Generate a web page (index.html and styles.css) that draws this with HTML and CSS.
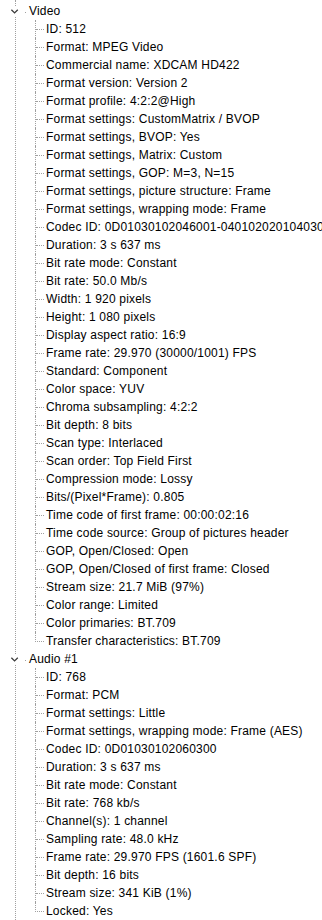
FILE: index.html
```html
<!DOCTYPE html>
<html>
  <head>
    <meta charset="UTF-8">
    <title>MediaInfo - Tree</title>
    <link rel="stylesheet" href="styles.css">
  </head>
  <body>
    <ul class="tree">
      <li class="node">
        <div class="node-head">
          <span class="toggle">
            <svg width="12" height="10" viewBox="0 0 12 10"><path d="M1.5 2.5 L5 6 L8.5 2.5" fill="none" stroke="#3c3c3c" stroke-width="1.4"/></svg>
          </span>
          <span class="dot"></span>
          <span class="label">Video</span>
        </div>
        <ul class="children">
          <li>ID: 512</li>
          <li>Format: MPEG Video</li>
          <li>Commercial name: XDCAM HD422</li>
          <li>Format version: Version 2</li>
          <li>Format profile: 4:2:2@High</li>
          <li>Format settings: CustomMatrix / BVOP</li>
          <li>Format settings, BVOP: Yes</li>
          <li>Format settings, Matrix: Custom</li>
          <li>Format settings, GOP: M=3, N=15</li>
          <li>Format settings, picture structure: Frame</li>
          <li>Format settings, wrapping mode: Frame</li>
          <li>Codec ID: 0D01030102046001-0401020201040300</li>
          <li>Duration: 3 s 637 ms</li>
          <li>Bit rate mode: Constant</li>
          <li>Bit rate: 50.0 Mb/s</li>
          <li>Width: 1 920 pixels</li>
          <li>Height: 1 080 pixels</li>
          <li>Display aspect ratio: 16:9</li>
          <li>Frame rate: 29.970 (30000/1001) FPS</li>
          <li>Standard: Component</li>
          <li>Color space: YUV</li>
          <li>Chroma subsampling: 4:2:2</li>
          <li>Bit depth: 8 bits</li>
          <li>Scan type: Interlaced</li>
          <li>Scan order: Top Field First</li>
          <li>Compression mode: Lossy</li>
          <li>Bits/(Pixel*Frame): 0.805</li>
          <li>Time code of first frame: 00:00:02:16</li>
          <li>Time code source: Group of pictures header</li>
          <li>GOP, Open/Closed: Open</li>
          <li>GOP, Open/Closed of first frame: Closed</li>
          <li>Stream size: 21.7 MiB (97%)</li>
          <li>Color range: Limited</li>
          <li>Color primaries: BT.709</li>
          <li>Transfer characteristics: BT.709</li>
        </ul>
      </li>
      <li class="node">
        <div class="node-head">
          <span class="toggle">
            <svg width="12" height="10" viewBox="0 0 12 10"><path d="M1.5 2.5 L5 6 L8.5 2.5" fill="none" stroke="#3c3c3c" stroke-width="1.4"/></svg>
          </span>
          <span class="dot"></span>
          <span class="label">Audio #1</span>
        </div>
        <ul class="children">
          <li>ID: 768</li>
          <li>Format: PCM</li>
          <li>Format settings: Little</li>
          <li>Format settings, wrapping mode: Frame (AES)</li>
          <li>Codec ID: 0D01030102060300</li>
          <li>Duration: 3 s 637 ms</li>
          <li>Bit rate mode: Constant</li>
          <li>Bit rate: 768 kb/s</li>
          <li>Channel(s): 1 channel</li>
          <li>Sampling rate: 48.0 kHz</li>
          <li>Frame rate: 29.970 FPS (1601.6 SPF)</li>
          <li>Bit depth: 16 bits</li>
          <li>Stream size: 341 KiB (1%)</li>
          <li>Locked: Yes</li>
        </ul>
      </li>
    </ul>
  </body>
</html>
```
FILE: styles.css
```css
html,
body {
  margin: 0;
  height: 100%;
  background-color: #ffffff;
  overflow: hidden;
}
body {
  font-family: "Liberation Sans", Arial, sans-serif;
  font-size: 12px;
  letter-spacing: 0.2px;
  color: #000000;
  white-space: nowrap;
}
ul {
  list-style: none;
  margin: 0;
  padding: 0;
}
.tree {
  margin-left: 15px;
  padding-top: 2px;
  min-height: 100%;
  box-sizing: border-box;
  border-left: 1px dotted #a0a0a0;
}
.node-head {
  display: flex;
  align-items: center;
  height: 18px;
  margin-left: -7px;
}
.toggle {
  display: flex;
  align-items: center;
  flex-shrink: 0;
  width: 12px;
  height: 10px;
  background-color: #ffffff;
  margin-top: 1px;
}
.toggle svg {
  display: block;
  margin-left: 1px;
}
.dot {
  flex-shrink: 0;
  width: 1px;
  height: 1px;
  margin-left: 4px;
  margin-top: 3px;
  background-color: #a0a0a0;
}
.label {
  margin-left: 3px;
}
.children {
  margin-left: 19px;
}
.children li {
  display: flex;
  height: 18px;
  line-height: 18px;
  border-left: 1px dotted #a0a0a0;
}
.children li::before {
  content: "";
  flex-shrink: 0;
  width: 8px;
  height: 0;
  margin-top: 9px;
  margin-right: 2px;
  border-top: 1px dotted #a0a0a0;
}
.children li:last-child {
  border-left: none;
}
.children li:last-child::before {
  width: 8px;
  height: 9px;
  margin-top: 0;
  margin-right: 2px;
  border-left: 1px dotted #a0a0a0;
  border-bottom: 1px dotted #a0a0a0;
  border-top: none;
}
```
